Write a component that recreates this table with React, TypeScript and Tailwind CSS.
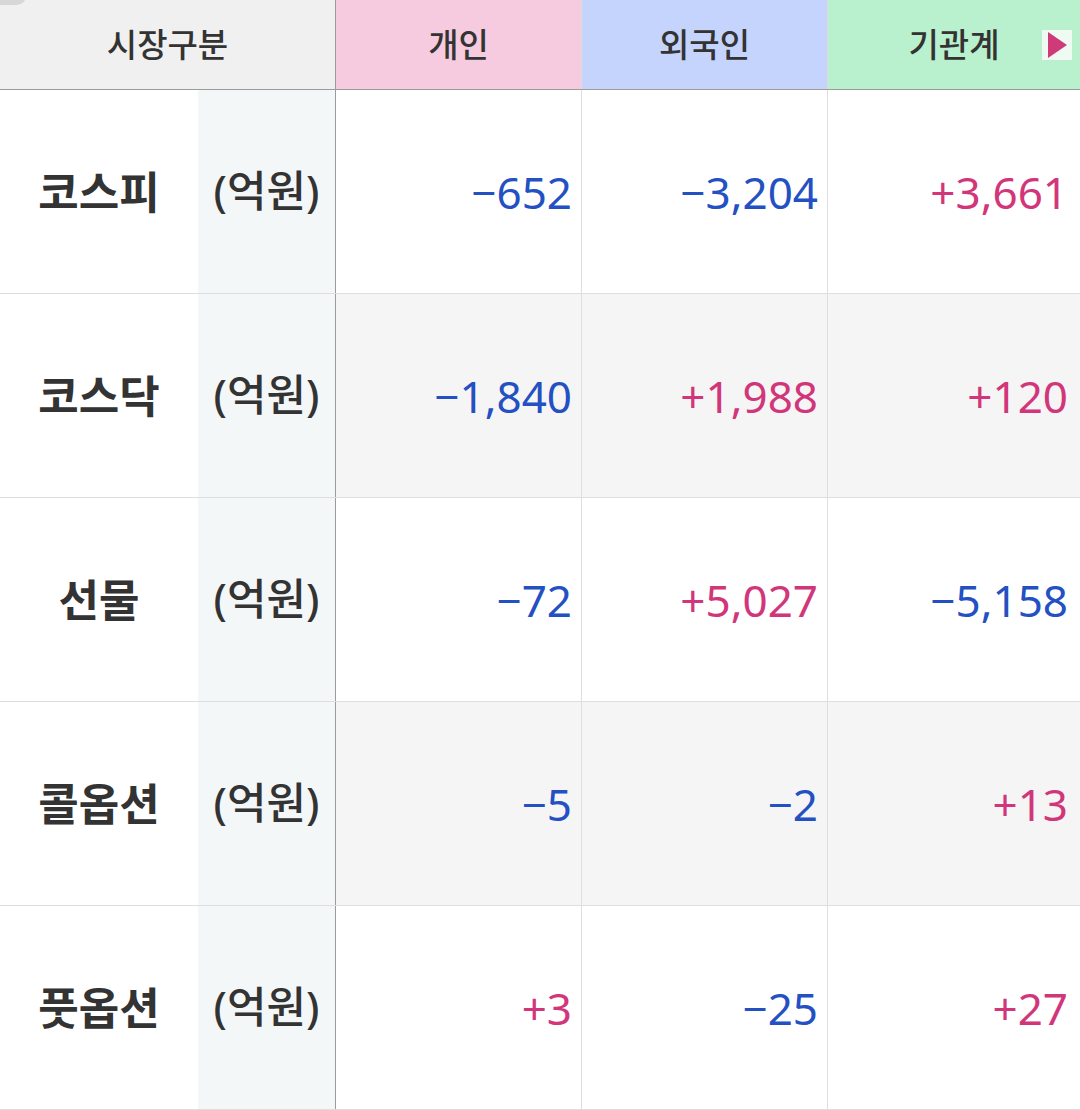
import React from "react";

type Row = {
  name: string;
  values: string[];
  shaded: boolean;
};

const rows: Row[] = [
  { name: "코스피", values: ["−652", "−3,204", "+3,661"], shaded: false },
  { name: "코스닥", values: ["−1,840", "+1,988", "+120"], shaded: true },
  { name: "선물", values: ["−72", "+5,027", "−5,158"], shaded: false },
  { name: "콜옵션", values: ["−5", "−2", "+13"], shaded: true },
  { name: "풋옵션", values: ["+3", "−25", "+27"], shaded: false },
];

const font = { fontFamily: '"Noto Sans", "Noto Sans CJK KR", sans-serif' };

const valueColor = (v: string) =>
  v.startsWith("+") ? "text-[#d2367a]" : "text-[#2350c2]";

const App = () => {
  return (
    <div className="w-[1080px] h-[1110px] bg-white overflow-hidden relative" style={font}>
      {/* tab shadow in the corner */}
      <div className="absolute left-[-10px] top-[-14px] w-[36px] h-[19px] rounded-full bg-[#d7d7d7]" />

      {/* header */}
      <div className="flex h-[90px] border-b border-[#9b9b9b] text-[33px] font-medium text-[#333]">
        <div className="w-[336px] bg-[#f0f0f0] border-r border-[#9b9b9b] flex items-center justify-center">
          시장구분
        </div>
        <div className="w-[246px] bg-[#f7cbdf] border-r border-[#dcdcdc] flex items-center justify-center">
          개인
        </div>
        <div className="w-[246px] bg-[#c5d4fd] border-r border-[#dcdcdc] flex items-center justify-center">
          외국인
        </div>
        <div className="flex-1 bg-[#b9f0cd] flex items-center justify-center relative">
          기관계
          <div className="absolute right-[8px] top-[30px] w-[30px] h-[30px] bg-[#eefaf2] flex items-center justify-center">
            <svg width="21" height="26" viewBox="0 0 21 26">
              <polygon points="1,0 20,13 1,26" fill="#cf3b78" />
            </svg>
          </div>
        </div>
      </div>

      {rows.map((row) => (
        <div key={row.name} className="flex h-[204px] border-b border-[#dedede]">
          <div className="w-[198px] flex items-center justify-center text-[44px] font-bold text-[#333] bg-white">
            {row.name}
          </div>
          <div className="w-[138px] bg-[#f4f7f8] border-r border-[#9b9b9b] flex items-center justify-center text-[43px] font-medium text-[#333]">
            (억원)
          </div>
          {row.values.map((v, i) => (
            <div
              key={i}
              className={`${i < 2 ? "w-[246px] border-r border-[#dedede] pr-[9px]" : "flex-1 pr-[12px]"} ${
                row.shaded ? "bg-[#f5f5f5]" : "bg-white"
              } flex items-center justify-end text-[44px] ${valueColor(v)}`}
            >
              {v}
            </div>
          ))}
        </div>
      ))}
    </div>
  );
};

export default App;
